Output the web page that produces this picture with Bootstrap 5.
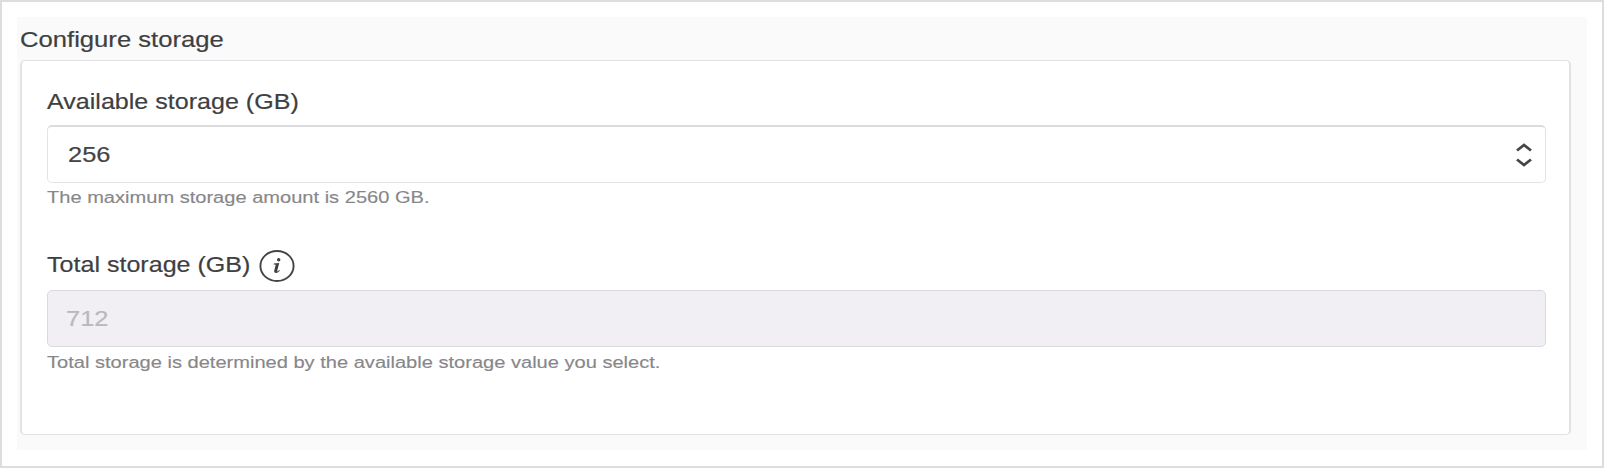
<!DOCTYPE html>
<html lang="en">
<head>
<meta charset="utf-8">
<meta name="viewport" content="width=device-width, initial-scale=1">
<title>Configure storage</title>
<link href="https://cdn.jsdelivr.net/npm/bootstrap@5.3.0/dist/css/bootstrap.min.css" rel="stylesheet">
<style>
body{font-family:"Liberation Sans",Arial,sans-serif;color:#3f3f42;background:#fff}
.frame{height:468px;border:2px solid #ddd;padding:15px}
.panel{height:433px;background:#fafafb;padding:0 16px 0 3px}
.wide{display:block;width:max-content;white-space:nowrap;transform-origin:0 50%;transform:scaleX(1.13)}
.title{font-size:22.7px;line-height:28px;padding:8px 0 0 0;height:43px;-webkit-text-stroke:.2px}
.storage-card{height:375px;border:2px solid #e1e1e8;border-top-width:1px;border-bottom-width:1px;border-radius:5px;padding:27px 23px 0 25px}
.field-label{font-size:22.2px;line-height:28px;height:37px;-webkit-text-stroke:.2px}
.field{height:58px;border:1px solid #e4e4e8;border-top:2px solid #dcdcde;border-radius:5px;padding:0 12px 0 20px;font-size:22.5px;background:#fff;color:#444446;-webkit-text-stroke:.2px}
.field-off{height:57px;background:#f1eff3;border:1px solid #d9d9e0;color:#b9b9bc;padding-left:18px}
.hint{font-size:17.3px;line-height:22px;color:#87878a;padding:3px 0 0 0;-webkit-text-stroke:.15px}
.hint .wide{transform:scaleX(1.161)}
.second{margin-top:43px}
.second .field-label{height:39px}
.second .hint{padding-top:4px}
.info{margin:-2px 0 0 32px}
</style>
</head>
<body>
<main class="frame">
<section class="panel">
<h1 class="title m-0 fw-normal"><span class="wide">Configure storage</span></h1>
<div class="card storage-card">
<div>
<div class="field-label"><span class="wide">Available storage (GB)</span></div>
<div class="field d-flex align-items-center justify-content-between">
<span class="wide">256</span>
<svg width="18" height="26" viewBox="0 0 18 26" fill="none" stroke="#464648" stroke-width="2.8"><path d="M2 8.5 9 3l7 5.5M2 17.5 9 23l7-5.5"/></svg>
</div>
<div class="hint"><span class="wide">The maximum storage amount is 2560 GB.</span></div>
</div>
<div class="second">
<div class="field-label d-flex"><span class="wide">Total storage (GB)</span>
<svg class="info" width="36" height="34" viewBox="0 0 36 34"><ellipse cx="18" cy="17" rx="16.6" ry="15" fill="none" stroke="#444447" stroke-width="1.9"/><g fill="#3f3f42"><circle cx="19.7" cy="10.7" r="1.7"/><path d="M14.7 14.6 20.2 14l-2 7.7c-.2.8.4.9 1 .3l1-1 .7.5c-1.2 1.6-2.4 2.4-3.7 2.4-1.7 0-2.3-1-1.9-2.5l1.3-5.2c.2-.6 0-.8-.7-.8h-1.4z"/></g></svg></div>
<div class="field field-off d-flex align-items-center"><span class="wide">712</span></div>
<div class="hint"><span class="wide">Total storage is determined by the available storage value you select.</span></div>
</div>
</div>
</section>
</main>
<script src="https://cdn.jsdelivr.net/npm/bootstrap@5.3.0/dist/js/bootstrap.bundle.min.js"></script>
</body>
</html>
